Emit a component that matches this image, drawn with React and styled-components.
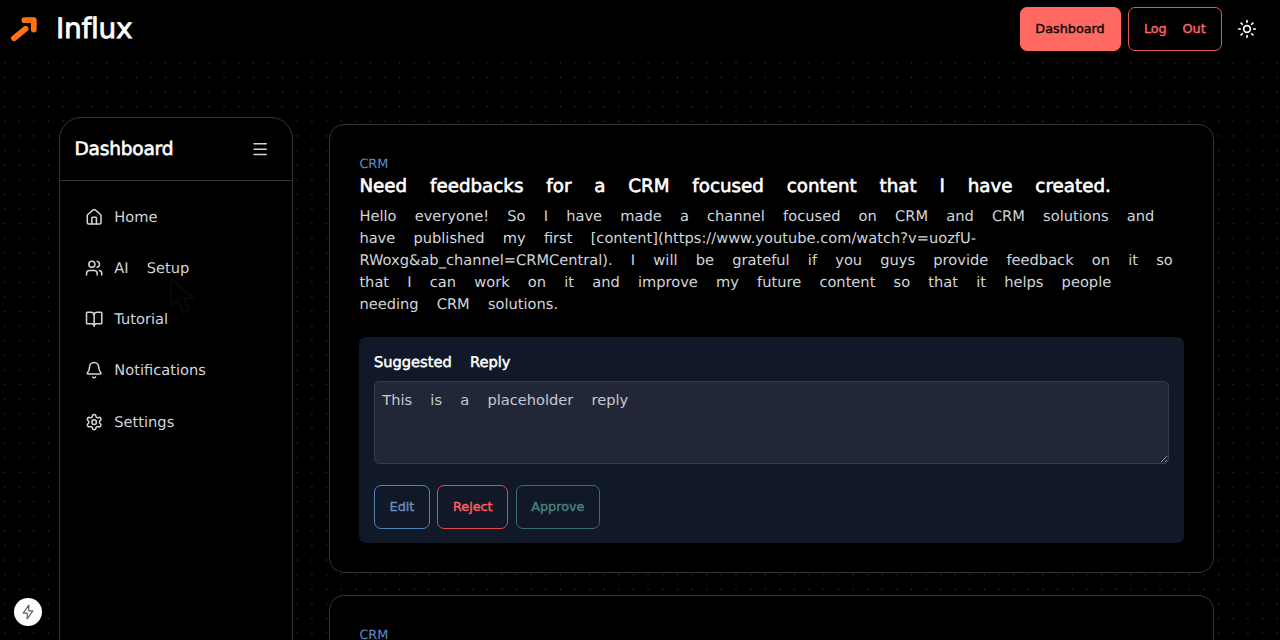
import React from 'react';
import styled, { createGlobalStyle } from 'styled-components';
import { House, Users, BookOpen, Bell, Settings, Menu, Sun } from 'lucide-react';

const Global = createGlobalStyle`
  * { box-sizing: border-box; }
  html, body { margin: 0; height: 100%; overflow: hidden; background: #000; }
  body {
    font-family: "DejaVu Sans", sans-serif;
    font-size: 14.64px;
    line-height: 22px;
    word-spacing: 13.54px;
    color: #d1d5db;
    text-rendering: geometricPrecision;
  }
  h1, h2, h3, h4, p { margin: 0; font-weight: 400; }
  button { font: inherit; word-spacing: inherit; margin: 0; cursor: pointer; }
`;

const Page = styled.div`
  height: 640px;
  overflow: hidden;
  display: flex;
  flex-direction: column;
  background-color: #000;
  background-image: radial-gradient(circle at center, #2c2c2c 0.5px, transparent 1.2px);
  background-size: 14.64px 14.64px;
  background-position: -2.6px -3px;
`;

const Header = styled.header`
  flex: none;
  height: 58px;
  padding: 0 23px 0 10px;
  background: #000;
  display: flex;
  align-items: center;
  justify-content: space-between;
`;

const Brand = styled.div`
  display: flex;
  align-items: center;
  gap: 17px;
`;

const BrandName = styled.h1`
  font-size: 28px;
  line-height: 32px;
  letter-spacing: -0.3px;
  color: #fff;
  -webkit-text-stroke: 0.8px #fff;
`;

const Actions = styled.div`
  display: flex;
  align-items: center;
`;

const tones = {
  solid: ['#ff6961', '#ff6961', '#0a0a0a'],
  coral: ['transparent', '#e0585a', '#ff6467'],
  blue: ['transparent', '#5283b8', '#668fba'],
  red: ['transparent', '#e5484b', '#ff5f62'],
  green: ['transparent', '#397066', '#46857c'],
};

const Button = styled.button`
  width: ${p => p.$w}px;
  height: 44px;
  padding: 0;
  white-space: nowrap;
  border-radius: 7px;
  background: ${p => tones[p.$tone][0]};
  border: 1px solid ${p => tones[p.$tone][1]};
  color: ${p => tones[p.$tone][2]};
  font-size: 12.81px;
  word-spacing: 11.7px;
  -webkit-text-stroke: 0.4px currentColor;
  & + & { margin-left: 7.3px; }
`;

const ThemeToggle = styled.span`
  display: flex;
  margin-left: 15.2px;
  color: #fff;
`;

const Body = styled.div`
  flex: 1;
  min-height: 0;
  display: flex;
  align-items: flex-start;
  padding: 59px 66px 0 58.6px;
  gap: 36.8px;
`;

const Sidebar = styled.aside`
  flex: none;
  width: 234px;
  height: 700px;
  background: #000;
  border: 1px solid #31343c;
  border-radius: 22px 22px 0 0;
`;

const SideHead = styled.div`
  height: 63px;
  padding: 0 22px 0 14.8px;
  border-bottom: 1px solid #34373f;
  display: flex;
  align-items: center;
  justify-content: space-between;
`;

const SideTitle = styled.h2`
  font-size: 18.6px;
  padding-top: 1.4px;
  letter-spacing: -0.22px;
  color: #fff;
  -webkit-text-stroke: 0.6px #fff;
`;

const Nav = styled.nav`
  display: flex;
  flex-direction: column;
  padding: 10.4px 14.4px;
`;

const NavItem = styled.a`
  height: 51.2px;
  padding: 0 11px;
  display: flex;
  align-items: center;
  gap: 11px;
  color: #d1d5db;
`;

const NavLabel = styled.span`
  padding-top: 1.8px;
`;

const Feed = styled.main`
  flex: 1;
  padding-top: 7px;
  display: flex;
  flex-direction: column;
  gap: 22px;
`;

const Card = styled.article`
  height: 449px;
  background: #000;
  border: 1px solid #31343c;
  border-radius: 15px;
  padding: 29.5px 29px 28px;
`;

const Tag = styled.div`
  font-size: 12.81px;
  line-height: 20px;
  color: #5e8fcb;
`;

const PostTitle = styled.h3`
  font-size: 18.3px;
  line-height: 25.6px;
  margin-top: -1px;
  word-spacing: 17px;
  color: #fff;
  -webkit-text-stroke: 0.6px #fff;
  white-space: nowrap;
`;

const PostBody = styled.p`
  margin-top: 7px;
  white-space: pre;
`;

const Reply = styled.section`
  margin-top: 21px;
  height: 206px;
  padding: 14.8px 14.6px 13px;
  border-radius: 7px;
  background: #111827;
`;

const ReplyTitle = styled.h4`
  color: #fff;
  -webkit-text-stroke: 0.5px #fff;
`;

const ReplyInput = styled.textarea`
  display: block;
  width: 100%;
  height: 83px;
  margin: 6.8px 0 21px;
  padding: 7.3px;
  font: inherit;
  word-spacing: inherit;
  color: #c5c9d0;
  background: #222738;
  border: 1px solid #353b49;
  border-radius: 5px;
  outline: none;
  resize: vertical;
  color-scheme: dark;
`;

const ReplyActions = styled.div`
  display: flex;
`;

const DevBadge = styled.div`
  position: fixed;
  left: 14px;
  top: 598px;
  width: 28px;
  height: 28px;
  border-radius: 50%;
  background: #fff;
  display: flex;
  align-items: center;
  justify-content: center;
`;

const Pointer = styled.svg`
  position: fixed;
  left: 169px;
  top: 276px;
`;

const Logo = () => (
  <svg width="29" height="28" viewBox="0 0 29 28" fill="none" stroke="#ff7410" strokeWidth="5.8" strokeLinecap="round" strokeLinejoin="round">
    <path d="M4 23.2 L15.6 13.8" />
    <path d="M14.4 5.2 H23.8 V14.6" />
  </svg>
);

const Bolt = () => (
  <svg width="12" height="16" viewBox="0 0 12 16" fill="none" stroke="#666" strokeWidth="1.3" strokeLinejoin="round">
    <path d="M6.8 1.2 L1.2 9.1 H5.2 V14.8 L10.8 6.9 H6.8 Z" />
  </svg>
);

const links = [
  ['Home', House],
  ['AI Setup', Users],
  ['Tutorial', BookOpen],
  ['Notifications', Bell],
  ['Settings', Settings],
];

const post = `Hello everyone! So I have made a channel focused on CRM and CRM solutions and
have published my first [content](https://www.youtube.com/watch?v=uozfU-
RWoxg&ab_channel=CRMCentral). I will be grateful if you guys provide feedback on it so
that I can work on it and improve my future content so that it helps people
needing CRM solutions.`;

export default function App() {
  return (
    <Page>
      <Global />
      <Header>
        <Brand>
          <Logo />
          <BrandName>Influx</BrandName>
        </Brand>
        <Actions>
          <Button $tone="solid" $w={101}>Dashboard</Button>
          <Button $tone="coral" $w={94}>Log Out</Button>
          <ThemeToggle><Sun size={20} strokeWidth={2} /></ThemeToggle>
        </Actions>
      </Header>
      <Body>
        <Sidebar>
          <SideHead>
            <SideTitle>Dashboard</SideTitle>
            <Menu size={18.3} strokeWidth={2} />
          </SideHead>
          <Nav>
            {links.map(([label, Icon]) => (
              <NavItem key={label}>
                <Icon size={18.3} strokeWidth={2} />
                <NavLabel>{label}</NavLabel>
              </NavItem>
            ))}
          </Nav>
        </Sidebar>
        <Feed>
          <Card>
            <Tag>CRM</Tag>
            <PostTitle>Need feedbacks for a CRM focused content that I have created.</PostTitle>
            <PostBody>{post}</PostBody>
            <Reply>
              <ReplyTitle>Suggested Reply</ReplyTitle>
              <ReplyInput defaultValue="This is a placeholder reply" spellCheck={false} />
              <ReplyActions>
                <Button $tone="blue" $w={56}>Edit</Button>
                <Button $tone="red" $w={71}>Reject</Button>
                <Button $tone="green" $w={84.5}>Approve</Button>
              </ReplyActions>
            </Reply>
          </Card>
          <Card>
            <Tag>CRM</Tag>
          </Card>
        </Feed>
      </Body>
      <Pointer width="26" height="40" viewBox="0 0 26 40" fill="none" stroke="#080808" strokeWidth="2">
        <path d="M2 2 V29 L9 24 L14 37 L20 34 L15 22 H24 Z" />
      </Pointer>
      <DevBadge><Bolt /></DevBadge>
    </Page>
  );
}
